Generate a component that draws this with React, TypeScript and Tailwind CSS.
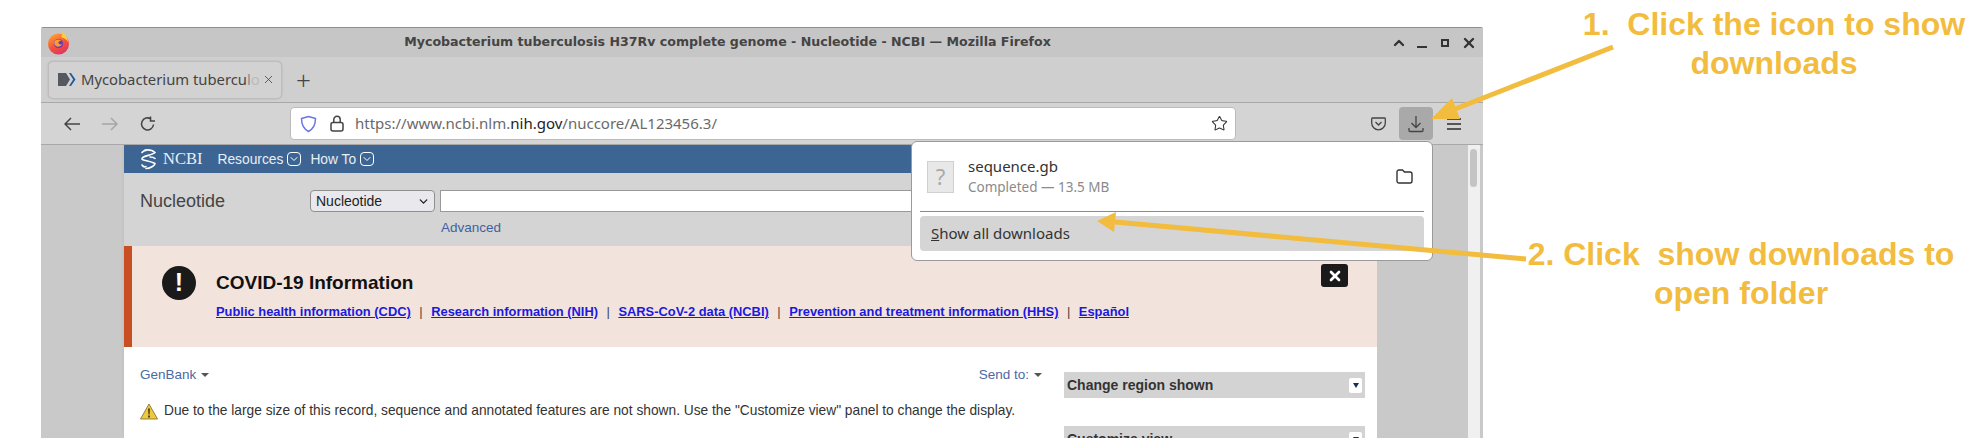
import { ChevronDown, ChevronUp, Star, X } from "lucide-react";

const uiFont = "font-['Noto_Sans',sans-serif]";
const pageFont = "font-['Liberation_Sans',Arial,sans-serif]";

function FirefoxLogo() {
  return (
    <svg width="24" height="24" viewBox="0 0 24 24">
      <defs>
        <linearGradient id="ff" x1="0.2" y1="0" x2="0.7" y2="1">
          <stop offset="0" stopColor="#ffa436" />
          <stop offset="0.55" stopColor="#f4513a" />
          <stop offset="1" stopColor="#e0316a" />
        </linearGradient>
      </defs>
      <circle cx="11.500" cy="13" r="10.500" fill="url(#ff)" />
      <path d="M15 1c3 2 6 6 6 10-2-3-4-4-7-5 1-2 2-3 1-5z" fill="#ffcb3d" />
      <circle cx="11.500" cy="12.500" r="4.500" fill="#5b3cc4" />
      <path d="M8 9.500c2-1.500 5-1.500 7 .5-1.500-.5-3 0-3.500 1.500s2 2.500 3.500 1.500c-1 2.500-4 3.500-6 2-1.500-1-2.500-3.500-1-5.500z" fill="#ff9a2e" />
    </svg>
  );
}

function NcbiFavicon() {
  return (
    <svg width="18" height="15" viewBox="0 0 18 15">
      <path d="M0 1h8l4 6.500L8 14H0z" fill="#55585e" />
      <path d="M11 1h2l4.500 6.500L13 14h-2l4.200-6.500z" fill="#1f5a9e" />
    </svg>
  );
}

function ShieldIcon() {
  return (
    <svg width="17" height="18" viewBox="0 0 17 18" fill="none">
      <path d="M8.500 1.500 15.500 3.500c0 6-1.500 10-7 13-5.500-3-7-7-7-13z" stroke="#6d75e6" strokeWidth="1.500" strokeLinejoin="round" />
    </svg>
  );
}

function LockIcon() {
  return (
    <svg width="14" height="17" viewBox="0 0 14 17" fill="none" stroke="#444" strokeWidth="1.500">
      <rect x="1" y="7.500" width="12" height="8.500" rx="2" />
      <path d="M3.800 7.500V4.500a3.200 3.200 0 0 1 6.400 0v3" />
    </svg>
  );
}

function BackArrow({ color, flip }: { color: string; flip?: boolean }) {
  return (
    <svg width="16" height="14" viewBox="0 0 16 14" fill="none" stroke={color} strokeWidth="1.500" className={flip ? "-scale-x-100" : ""}>
      <path d="M1 7h15M7 1 1 7l6 6" />
    </svg>
  );
}

function ReloadIcon() {
  return (
    <svg width="16" height="16" viewBox="0 0 16 16" fill="none" stroke="#444" strokeWidth="1.500">
      <path d="M13.500 8.500A6 6 0 1 1 11 3" />
      <path d="M10.500 .5v4.500H15" />
    </svg>
  );
}

function PocketIcon() {
  return (
    <svg width="15" height="14" viewBox="0 0 15 14" fill="none" stroke="#444" strokeWidth="1.300">
      <path d="M1.500 1h12c.5 0 .8.400.8.800V6a6.800 6.800 0 0 1-13.600 0V1.800c0-.4.300-.8.800-.8z" />
      <path d="m4.500 5 3 3 3-3" />
    </svg>
  );
}

function DownloadIcon() {
  return (
    <svg width="16" height="18" viewBox="0 0 16 18" fill="none" stroke="#444" strokeWidth="1.300">
      <path d="M8 1v11M3.500 8 8 12.500 12.500 8M1 13v2.500c0 .5.500 1 1 1h12c.5 0 1-.5 1-1V13" />
    </svg>
  );
}

function Hamburger() {
  return (
    <div className="flex w-[14px] flex-col gap-[3px]">
      <div className="h-[2px] bg-[#555]" />
      <div className="h-[2px] bg-[#555]" />
      <div className="h-[2px] bg-[#555]" />
    </div>
  );
}

function HelixLogo() {
  return (
    <svg width="18" height="21" viewBox="0 0 18 21" fill="none" stroke="#fff" strokeWidth="1.600" strokeLinecap="round">
      <path d="M5 1c4-.5 8 .5 10 2.500-3 3-12 3-13 6-1 2 8 2 13 5 0 2-5 5-9 5" />
      <path d="M2 3.500c1-1.500 3-2 4-2M15 9.500c-1-1-3-1.500-5-1.500M2 16c1 1.500 3 2 4 1.500" />
    </svg>
  );
}

function MenuChevron() {
  return (
    <div className="flex h-[14px] w-[14px] items-center justify-center rounded-[4px] border border-white">
      <ChevronDown size={12} strokeWidth={2} color="#fff" />
    </div>
  );
}

function Caret() {
  return <span className="ml-[5px] inline-block h-0 w-0 border-x-[4px] border-t-[4px] border-x-transparent border-t-[#555] align-middle" />;
}

function FolderIcon() {
  return (
    <svg width="17" height="15" viewBox="0 0 17 15" fill="none" stroke="#333" strokeWidth="1.400">
      <path d="M1 3c0-1 .6-2 2-2h3.500L8.500 3H14c1 0 2 .8 2 2v7c0 1.200-1 2-2 2H3c-1.400 0-2-1-2-2z" />
    </svg>
  );
}

function PanelHeader({ title, className }: { title: string; className: string }) {
  return (
    <div className={`flex h-[26px] items-center justify-between bg-[#d3d3d3] pl-[3px] pr-[3px] ${className}`}>
      <span className="text-[14px] font-bold text-[#333]">{title}</span>
      <div className="flex h-[15px] w-[13px] items-center justify-center rounded-[2px] bg-white">
        <span className="h-0 w-0 border-x-[3.500px] border-t-[5px] border-x-transparent border-t-[#14305c]" />
      </div>
    </div>
  );
}

const links = [
  "Public health information (CDC)",
  "Research information (NIH)",
  "SARS-CoV-2 data (NCBI)",
  "Prevention and treatment information (HHS)",
  "Español",
];

export default function App() {
  return (
    <div className="relative flex h-[438px] w-[1976px] overflow-hidden bg-white">
      <div className={`ml-[41px] mt-[27px] flex w-[1442px] flex-col rounded-t-[2px] border-t border-[#8f8f8f] bg-[#cbcbcb] ${uiFont}`}>
        {/* title bar */}
        <div className="flex h-[29px] shrink-0 items-center bg-[#c6c6c6] pl-[6px] pr-[6px]">
          <FirefoxLogo />
          <div className="flex-1 pr-[7px] text-center font-['DejaVu_Sans',sans-serif] text-[12.600px] font-bold text-[#444]">
            Mycobacterium tuberculosis H37Rv complete genome - Nucleotide - NCBI — Mozilla Firefox
          </div>
          <div className="flex items-center text-[#333]">
            <ChevronUp size={16} strokeWidth={3.500} />
            <div className="ml-[10px] mt-[9px] h-[2px] w-[10px] bg-[#333]" />
            <div className="ml-[14px] h-[8px] w-[8px] border-2 border-[#333]" />
            <X size={16} strokeWidth={3.500} className="ml-[12px]" />
          </div>
        </div>

        {/* tabs */}
        <div className="flex h-[46px] shrink-0 items-center border-b border-[#a8a8a8] bg-[#cfcfcf] pl-[7px]">
          <div className="flex h-[38px] w-[234px] items-center rounded-[5px] border border-[#bdbdbd] bg-[#d2d2d2] pl-[9px] shadow-[0_0_2px_rgba(0,0,0,0.15)]">
            <NcbiFavicon />
            <span className="ml-[5px] whitespace-nowrap text-[14.800px] text-[#444]">
              Mycobacterium tubercu<span className="text-[#8c8c8c]">l</span><span className="text-[#bbb]">o</span>
            </span>
            <X size={13} strokeWidth={1.500} color="#444" className="ml-[2px]" />
          </div>
          <span className="ml-[14px] text-[26px] font-light leading-none text-[#444]">+</span>
        </div>

        {/* nav bar */}
        <div className="flex h-[42px] shrink-0 items-center border-b border-[#a8a8a8] bg-[#d4d4d4] pl-[23px] pr-[22px]">
          <BackArrow color="#444" />
          <div className="ml-[22px]"><BackArrow color="#a5a5a5" flip /></div>
          <div className="ml-[22px]"><ReloadIcon /></div>
          <div className="ml-[134px] flex h-[33px] w-[946px] items-center rounded-[4px] border border-[#bbb] bg-white pl-[9px] pr-[7px] text-[15px]">
            <ShieldIcon />
            <div className="ml-[13px]"><LockIcon /></div>
            <div className="ml-[11px] flex-1 whitespace-nowrap text-[#6a6a6a]">
              https://www.ncbi.nlm.<span className="text-[#222]">nih.gov</span>/nuccore/AL123456.3/
            </div>
            <Star size={17} strokeWidth={1.500} color="#333" />
          </div>
          <div className="flex-1" />
          <PocketIcon />
          <div className="ml-[13px] flex h-[33px] w-[34px] items-center justify-center rounded-[4px] bg-[#a9a9a9]">
            <DownloadIcon />
          </div>
          <div className="ml-[14px]"><Hamburger /></div>
        </div>

        {/* browser content */}
        <div className="flex min-h-0 flex-1 overflow-hidden">
          <div className="w-[83px] shrink-0 bg-[#c9c9c9]" />
          <div className={`w-[1253px] shrink-0 bg-white shadow-[2px_0_4px_rgba(0,0,0,0.25)] ${pageFont}`}>
            <div className="flex h-[28px] items-center bg-[#3d6593] pl-[16px] text-[#e8eef5]">
              <HelixLogo />
              <span className="ml-[5px] font-['Liberation_Serif',serif] text-[16.500px]">NCBI</span>
              <span className="ml-[15px] pt-[2px] text-[13.800px]">Resources</span>
              <div className="ml-[4px]"><MenuChevron /></div>
              <span className="ml-[9px] pt-[2px] text-[13.800px]">How To</span>
              <div className="ml-[4px]"><MenuChevron /></div>
            </div>
            <div className="h-[73px] bg-[#d4d4d4] pl-[16px] pt-[17px]">
              <div className="flex items-center">
                <span className="w-[170px] text-[18px] leading-[22px] text-[#444]">Nucleotide</span>
                <div className="flex h-[22px] w-[125px] items-center justify-between rounded-[4px] border border-[#8f8f8f] bg-[#e9e9ed] pl-[5px] pr-[4px] text-[14px] text-[#222]">
                  Nucleotide
                  <ChevronDown size={13} strokeWidth={2.500} color="#222" />
                </div>
                <div className="ml-[5px] h-[22px] w-[600px] border border-[#999] bg-white" />
              </div>
              <div className="ml-[301px] mt-[8px] text-[13.500px] leading-[15px] text-[#3f62a0]">Advanced</div>
            </div>
            <div className="flex h-[101px] border-l-[8px] border-[#c74f23] bg-[#f2e3dc]">
              <div className="ml-[30px] mt-[20px] flex h-[34px] w-[34px] items-center justify-center rounded-full bg-[#1a1a1a] text-[25px] font-bold text-white">!</div>
              <div className="ml-[20px] flex-1 pt-[26px]">
                <div className="text-[19px] font-bold leading-[22px] text-[#111]">COVID-19 Information</div>
                <div className="mt-[10px] flex items-center text-[12.900px] leading-[16px]">
                  {links.map((link, i) => (
                    <span key={link} className="flex items-center">
                      {i > 0 && <span className="mx-[8.500px] text-[#444]">|</span>}
                      <span className="font-bold text-[#1a1ae0] underline">{link}</span>
                    </span>
                  ))}
                </div>
              </div>
              <div className="mr-[29px] mt-[18px] flex h-[23px] w-[27px] items-center justify-center rounded-[3px] bg-[#1a1a1a]">
                <X size={16} strokeWidth={4} color="#fff" />
              </div>
            </div>
            <div className="flex pl-[16px] pr-[12px] pt-[25px]">
              <div className="w-[902px] shrink-0">
                <div className="-mt-[5px] flex items-center justify-between text-[13.500px] leading-[16px] text-[#4a6aa5]">
                  <span>GenBank<Caret /></span>
                  <span>Send to:<Caret /></span>
                </div>
                <div className="mt-[18px] flex items-center text-[13.750px] text-[#333]">
                  <svg width="18" height="17" viewBox="0 0 18 17" className="mr-[6px]">
                    <path d="M9 1 17.500 16H.5z" fill="#f0c83c" stroke="#7a6a2a" strokeWidth=".8" />
                    <path d="M8.200 5.500h1.600l-.3 6h-1zM8.200 12.500h1.600v2H8.200z" fill="#222" />
                  </svg>
                  Due to the large size of this record, sequence and annotated features are not shown. Use the "Customize view" panel to change the display.
                </div>
              </div>
              <div className="ml-[22px] flex-1">
                <PanelHeader title="Change region shown" className="" />
                <PanelHeader title="Customize view" className="mt-[28px]" />
              </div>
            </div>
          </div>
          <div className="flex-1 bg-[#c9c9c9]" />
          <div className="w-[15px] shrink-0 border-r-[3px] border-[#c9c9c9] bg-[#f0f0f0] pl-[2px] pt-[4px]">
            <div className="h-[38px] w-[7px] rounded-full bg-[#c4c4c4]" />
          </div>
        </div>
      </div>

      {/* captions */}
      <div className="flex-1 font-['Liberation_Sans',Arial,sans-serif] text-[32px] font-bold leading-[39px] text-[#f2bc3f]">
        <div className="ml-[89px] mt-[5px] whitespace-pre text-center">{"1.  Click the icon to show\ndownloads"}</div>
        <div className="ml-[23px] mt-[152px] whitespace-pre text-center">{"2. Click  show downloads to\nopen folder"}</div>
      </div>

      {/* download panel sits over the page */}
      <div className={`absolute left-[911px] top-[141px] h-[120px] w-[522px] rounded-[6px] border border-[#9a9a9a] bg-white px-[8px] ${uiFont}`}>
        <div className="flex h-[70px] items-center border-b border-[#8a8a8a] pl-[7px] pr-[11px]">
          <div className="flex h-[32px] w-[27px] items-center justify-center border border-[#d0d0d0] bg-[#e8e8e8] text-[22px] text-[#aaa]">?</div>
          <div className="ml-[14px] flex-1">
            <div className="text-[15px] leading-[20px] text-[#333]">sequence.gb</div>
            <div className="mt-[1px] text-[13.500px] leading-[20px] text-[#8a8a8a]">Completed — 13.5 MB</div>
          </div>
          <FolderIcon />
        </div>
        <div className="mt-[4px] flex h-[35px] items-center rounded-[4px] bg-[#d5d5d5] pl-[11px] text-[15px] text-[#333]">
          <span><span className="underline">S</span>how all downloads</span>
        </div>
      </div>

      {/* arrows */}
      <svg className="pointer-events-none absolute left-0 top-0" width="1976" height="438" fill="none">
        <path d="M1613 47 1445 113" stroke="#f2bc3f" strokeWidth="5" />
        <path d="M1431 119 1452 98 1460 119z" fill="#f2bc3f" />
        <path d="M1526 259 1115 222" stroke="#f2bc3f" strokeWidth="5" />
        <path d="M1097 221 1116 212 1114 232z" fill="#f2bc3f" />
      </svg>
    </div>
  );
}
